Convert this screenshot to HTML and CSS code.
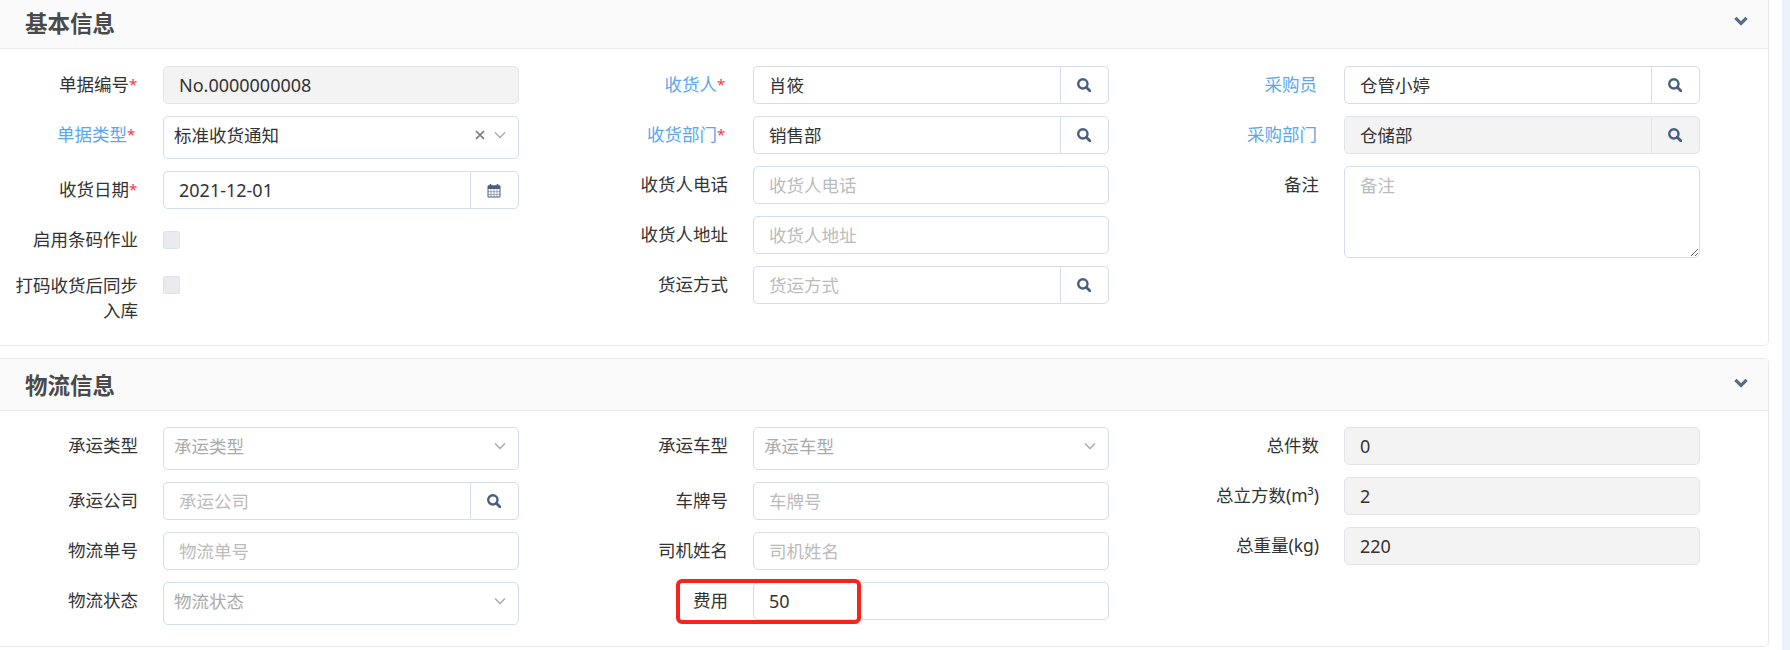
FILE: index.html
```html
<!DOCTYPE html>
<html lang="zh">
<head>
<meta charset="utf-8">
<title>收货通知单</title>
<link rel="stylesheet" href="styles.css">
</head>
<body>
<svg class="sprites" width="0" height="0" aria-hidden="true">
  <symbol id="i-search" viewBox="0.6 0.6 12.9 12.9"><circle cx="6" cy="6" r="4.3" fill="none" stroke="currentColor" stroke-width="2.2"/><path d="M9.2 9.2l3.2 3.2" fill="none" stroke="currentColor" stroke-width="2.6" stroke-linecap="round"/></symbol>
  <symbol id="i-down" viewBox="0 0 14 10"><path d="M1.4 1.8L7 7.4l5.6-5.6" fill="none" stroke="currentColor" stroke-width="3.2"/></symbol>
  <symbol id="i-caret" viewBox="0 0 12 8"><path d="M1 1.5l5 5 5-5" fill="none" stroke="currentColor" stroke-width="1.5"/></symbol>
  <symbol id="i-x" viewBox="0 0 10 10"><path d="M1 1l8 8M9 1l-8 8" fill="none" stroke="currentColor" stroke-width="1.7"/></symbol>
  <symbol id="i-cal" viewBox="0 0 14 15"><path d="M1 3h12v11H1z" fill="none" stroke="currentColor"/><path d="M1 2.5h12V6H1z" fill="currentColor"/><path d="M3.5 1v3M10.5 1v3" stroke="currentColor" stroke-width="1.6"/><path d="M4 6v8M7 6v8M10 6v8M1 8.7h12M1 11.4h12" stroke="currentColor" stroke-width=".7" opacity=".75"/></symbol>
</svg>
<main class="page">

  <section class="panel">
    <header class="panel-head"><h2 class="panel-title">基本信息</h2><svg class="collapse"><use href="#i-down"/></svg></header>
    <div class="panel-body">
      <div class="col">
        <div class="row"><label class="label">单据编号<i class="req">*</i></label><input class="field is-disabled is-num" value="No.0000000008" readonly></div>
        <div class="row"><label class="label is-link">单据类型<i class="req">*</i></label><div class="select"><span class="select-text">标准收货通知</span><svg class="ico-x"><use href="#i-x"/></svg><svg class="ico-caret"><use href="#i-caret"/></svg></div></div>
        <div class="row"><label class="label">收货日期<i class="req">*</i></label><div class="group"><input class="field is-num" value="2021-12-01"><span class="addon"><svg class="ico-cal"><use href="#i-cal"/></svg></span></div></div>
        <div class="row row-check"><label class="label">启用条码作业</label><span class="check"></span></div>
        <div class="row row-check2"><label class="label">打码收货后同步入库</label><span class="check"></span></div>
      </div>
      <div class="col">
        <div class="row"><label class="label is-link">收货人<i class="req">*</i></label><div class="group"><input class="field" value="肖筱"><span class="addon"><svg class="ico-search"><use href="#i-search"/></svg></span></div></div>
        <div class="row"><label class="label is-link">收货部门<i class="req">*</i></label><div class="group"><input class="field" value="销售部"><span class="addon"><svg class="ico-search"><use href="#i-search"/></svg></span></div></div>
        <div class="row"><label class="label">收货人电话</label><input class="field" placeholder="收货人电话"></div>
        <div class="row"><label class="label">收货人地址</label><input class="field" placeholder="收货人地址"></div>
        <div class="row"><label class="label">货运方式</label><div class="group"><input class="field" placeholder="货运方式"><span class="addon"><svg class="ico-search"><use href="#i-search"/></svg></span></div></div>
      </div>
      <div class="col">
        <div class="row"><label class="label is-link">采购员</label><div class="group"><input class="field" value="仓管小婷"><span class="addon"><svg class="ico-search"><use href="#i-search"/></svg></span></div></div>
        <div class="row"><label class="label is-link">采购部门</label><div class="group is-disabled"><input class="field" value="仓储部" readonly><span class="addon"><svg class="ico-search"><use href="#i-search"/></svg></span></div></div>
        <div class="row"><label class="label">备注</label><textarea class="field area" placeholder="备注"></textarea></div>
      </div>
    </div>
  </section>

  <section class="panel">
    <header class="panel-head"><h2 class="panel-title">物流信息</h2><svg class="collapse"><use href="#i-down"/></svg></header>
    <div class="panel-body panel-body-tight">
      <div class="col">
        <div class="row"><label class="label">承运类型</label><div class="select is-empty"><span class="select-text">承运类型</span><svg class="ico-caret"><use href="#i-caret"/></svg></div></div>
        <div class="row"><label class="label">承运公司</label><div class="group"><input class="field" placeholder="承运公司"><span class="addon"><svg class="ico-search"><use href="#i-search"/></svg></span></div></div>
        <div class="row"><label class="label">物流单号</label><input class="field" placeholder="物流单号"></div>
        <div class="row"><label class="label">物流状态</label><div class="select is-empty"><span class="select-text">物流状态</span><svg class="ico-caret"><use href="#i-caret"/></svg></div></div>
      </div>
      <div class="col">
        <div class="row"><label class="label">承运车型</label><div class="select is-empty"><span class="select-text">承运车型</span><svg class="ico-caret"><use href="#i-caret"/></svg></div></div>
        <div class="row"><label class="label">车牌号</label><input class="field" placeholder="车牌号"></div>
        <div class="row"><label class="label">司机姓名</label><input class="field" placeholder="司机姓名"></div>
        <div class="row"><label class="label">费用</label><input class="field is-num" value="50"><span class="mark"></span></div>
      </div>
      <div class="col">
        <div class="row"><label class="label">总件数</label><input class="field is-disabled is-num" value="0" readonly></div>
        <div class="row"><label class="label">总立方数(m³)</label><input class="field is-disabled is-num" value="2" readonly></div>
        <div class="row"><label class="label">总重量(kg)</label><input class="field is-disabled is-num" value="220" readonly></div>
      </div>
    </div>
  </section>

</main>
</body>
</html>
```
FILE: styles.css
```css
* { box-sizing: border-box; }
html, body { margin: 0; height: 650px; overflow: hidden; background: #fff; }
body {
  font-family: "Noto Sans", "Noto Sans CJK SC", sans-serif;
  font-size: 17.5px;
  line-height: 25px;
  color: #333;
  padding-right: 8px;
  border-right: 8px solid #eaf1fa;
  width: 1790px;
}
.sprites { position: absolute; }
.page { margin-top: -4px; padding-right: 5px; display: flex; flex-direction: column; gap: 12px; }
.panel { border: 1px solid #e7e9ec; border-left: 0; border-radius: 0 5px 5px 0; background: #fff; }
.panel-head { height: 52px; background: #fafafa; border-bottom: 1px solid #e7e9ec; display: flex; align-items: center; justify-content: space-between; padding: 0 20px 0 25px; }
.panel-title { margin: 0 0 2px; font-size: 22.5px; line-height: 30px; font-weight: 700; color: #4a4a4a; font-family: "Noto Sans CJK SC", sans-serif; }
.collapse { width: 14px; height: 10px; color: #5a6b82; margin-bottom: 3px; }
.panel-body { display: grid; grid-template-columns: 590px 591px 1fr; padding: 17px 0 22px; }
.panel-body-tight { padding: 16px 0 21px; }
.col { display: flex; flex-direction: column; gap: 12px; }
.row { display: flex; align-items: flex-start; gap: 25px; position: relative; width: 518.5px; }
.label { flex: 0 0 138px; text-align: right; padding-top: 6px; }
.label.is-link { color: #5ba6f0; padding-right: 2px; }
.req { font-style: normal; color: #f0394a; display: inline-block; width: 8px; text-align: right; font-size: 15px; line-height: 15px; vertical-align: 1px; }
.label:has(.req) { padding-right: 1px; }
.label.is-link:has(.req) { padding-right: 3px; }
.field { flex: 1; min-width: 0; height: 38px; border: 1px solid #d5ddeb; border-radius: 5px; background: #fff; color: #333; font: inherit; padding: 0 15px 1px; outline: 0; }
.field::placeholder { color: #bbb; opacity: 1; }
.field.is-disabled { background: #f3f3f3; border-color: #e2e4e8; }
.field.is-num { font-size: 18px; }
.area { height: 92px; padding-top: 6px; padding-bottom: 5px; resize: vertical; display: block; }
.group { flex: 1; min-width: 0; display: flex; height: 38px; }
.group .field { border-radius: 5px 0 0 5px; border-right: 0; }
.addon { flex: 0 0 49px; border: 1px solid #d5ddeb; border-radius: 0 5px 5px 0; display: flex; align-items: center; justify-content: center; color: #4a5f7f; }
.group.is-disabled .field, .group.is-disabled .addon { background: #f3f3f3; border-color: #e0e3e8; }
.ico-search { width: 14px; height: 14px; }
.ico-cal { width: 14px; height: 15px; }
.select { flex: 1; min-width: 0; height: 43px; border: 1px solid #d5ddeb; border-radius: 5px; display: flex; align-items: center; padding: 0 12px 5px 10px; }
.select-text { flex: 1; }
.select.is-empty .select-text { color: #aaa; }
.ico-x { width: 10px; height: 10px; color: #777; margin-right: 9px; }
.ico-caret { width: 12px; height: 8px; color: #aaa; }
.row-check { height: 34px; }
.row-check2 { height: 56px; }
.check { width: 17px; height: 18px; background: #e9ebee; border: 1px solid #dde3ea; border-radius: 2px; margin-top: 10px; }
.row-check2 .check { margin-top: 9px; }
.mark { position: absolute; left: 86px; top: -3px; width: 185px; height: 45px; border: 4px solid #f8231a; border-radius: 6px; }
```
